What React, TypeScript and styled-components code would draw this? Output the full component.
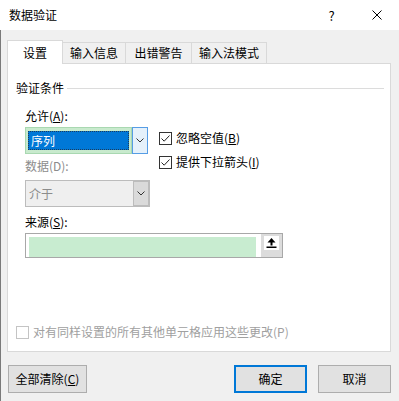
import React from "react";
import styled, { createGlobalStyle } from "styled-components";

const GlobalStyle = createGlobalStyle`
  html, body {
    margin: 0;
    padding: 0;
    background: #f0f0f0;
  }
  body {
    font-family: "Noto Sans CJK SC", "Noto Sans", sans-serif;
    font-size: 12px;
    color: #000;
  }
  * {
    box-sizing: border-box;
  }
`;

const Window = styled.div`
  width: 399px;
  height: 401px;
  display: flex;
  flex-direction: column;
  overflow: hidden;
`;

const TitleBar = styled.div`
  height: 30px;
  background: #fff;
  display: flex;
  align-items: center;
  padding-left: 9px;
`;

const Title = styled.span`
  flex: 1;
  font-size: 12px;
  line-height: 16px;
`;

const CaptionButton = styled.div`
  width: 45px;
  height: 30px;
  display: flex;
  align-items: center;
  justify-content: center;
  font-size: 13px;
  color: #000;
`;

const Body = styled.div`
  flex: 1;
  display: flex;
  flex-direction: column;
  background: #f0f0f0;
  border-left: 1px solid #7a7a7a;
  padding: 10px 8px 0 6px;
`;

const TabRow = styled.div`
  display: flex;
  align-items: flex-end;
  height: 24px;
  margin-bottom: -1px;
  position: relative;
  z-index: 1;
`;

const Tab = styled.div<{ $w: number; $active?: boolean }>`
  width: ${(p) => p.$w}px;
  height: ${(p) => (p.$active ? 24 : 21)}px;
  margin-bottom: ${(p) => (p.$active ? 0 : 1)}px;
  background: ${(p) => (p.$active ? "#fff" : "#f0f0f0")};
  border: 1px solid #d9d9d9;
  border-bottom: none;
  margin-left: ${(p) => (p.$active ? 0 : -1)}px;
  display: flex;
  align-items: center;
  justify-content: center;
  line-height: 16px;
  padding-top: ${(p) => (p.$active ? 1 : 0)}px;
`;

const Panel = styled.div`
  height: 289px;
  background: #fff;
  border: 1px solid #d9d9d9;
  display: flex;
  flex-direction: column;
  padding: 0 6px 11px 8px;
`;

const GroupHeader = styled.div`
  margin-top: 16px;
  display: flex;
  align-items: center;
  gap: 3px;
  line-height: 16px;
`;

const GroupLine = styled.div`
  flex: 1;
  height: 1px;
  background: #dcdcdc;
`;

const Form = styled.div`
  padding-left: 9px;
  display: flex;
  flex-direction: column;
`;

const Label = styled.div<{ $mt: number; $disabled?: boolean }>`
  margin-top: ${(p) => p.$mt}px;
  line-height: 16px;
  color: ${(p) => (p.$disabled ? "#8c8c8c" : "#000")};

  u {
    text-underline-offset: 1px;
  }
`;

const Row = styled.div`
  display: flex;
  margin-top: 3px;
`;

const LeftColumn = styled.div`
  width: 125px;
  display: flex;
  flex-direction: column;
`;

const RightColumn = styled.div`
  margin-left: 9px;
  padding-top: 3px;
  display: flex;
  flex-direction: column;
  gap: 8px;
`;

const CheckRow = styled.label<{ $disabled?: boolean }>`
  display: flex;
  align-items: center;
  gap: 4px;
  height: 16px;
  line-height: 16px;
  color: ${(p) => (p.$disabled ? "#a0a0a0" : "#000")};

  u {
    text-underline-offset: 1px;
  }
`;

const Box = styled.span<{ $disabled?: boolean }>`
  width: 13px;
  height: 13px;
  border: 1px solid ${(p) => (p.$disabled ? "#c4c4c4" : "#333")};
  background: #fff;
  display: flex;
  align-items: center;
  justify-content: center;
`;

const ComboActive = styled.div`
  width: 123px;
  height: 27px;
  display: flex;
`;

const ComboField = styled.div`
  flex: 1;
  background: #c8eacd;
  border: 1px solid #a9d8b1;
  padding: 3px 2px;
  display: flex;
`;

const ComboValue = styled.div`
  flex: 1;
  background: #0078d7;
  color: #fff;
  border: 1px dotted #1c3d5c;
  padding-left: 2px;
  line-height: 16px;
  display: flex;
  align-items: center;
`;

const DropButton = styled.div<{ $disabled?: boolean }>`
  width: 16px;
  display: flex;
  align-items: center;
  justify-content: center;
  background: ${(p) => (p.$disabled ? "#dadada" : "#e5f1fb")};
  border: 1px solid ${(p) => (p.$disabled ? "#bcbcbc" : "#569de5")};
  border-left-width: ${(p) => (p.$disabled ? 1 : 1)}px;
`;

const ComboDisabled = styled.div`
  width: 125px;
  height: 27px;
  margin-top: 6px;
  display: flex;
  background: #efefef;
  border: 1px solid #bcbcbc;
`;

const DisabledValue = styled.div`
  flex: 1;
  color: #8c8c8c;
  padding-left: 3px;
  display: flex;
  align-items: center;
  line-height: 16px;
`;

const SourceInput = styled.div`
  width: 258px;
  height: 25px;
  margin-top: 3px;
  display: flex;
  border: 1px solid #a8a8a8;
  background: #fff;
`;

const SourceFill = styled.div`
  flex: 1;
  margin: 3px 5px 0 3px;
  background: #c8ecd0;
`;

const RefButton = styled.div`
  width: 21px;
  background: #dcdcdc;
  display: flex;
  align-items: flex-start;
  justify-content: center;
  padding-top: 2px;
`;

const RefIcon = styled.div`
  width: 15px;
  height: 14px;
  background: #fff;
  display: flex;
  align-items: center;
  justify-content: center;
`;

const BottomCheck = styled.div`
  margin-top: auto;
`;

const Footer = styled.div`
  display: flex;
  padding: 13px 0 0 1px;
`;

const Button = styled.div<{ $w: number; $primary?: boolean }>`
  width: ${(p) => p.$w}px;
  height: 28px;
  background: #e1e1e1;
  border: ${(p) => (p.$primary ? "2px solid #0078d7" : "1px solid #adadad")};
  display: flex;
  align-items: center;
  justify-content: center;
  line-height: 16px;

  & + & {
    margin-left: 11px;
  }

  u {
    text-underline-offset: 1px;
  }
`;

const Spacer = styled.div`
  flex: 1;
`;

const Chevron = () => (
  <svg width="8" height="5" viewBox="0 0 8 5">
    <path d="M0.5 0.5 L4 4 L7.5 0.5" fill="none" stroke="#333" strokeWidth="1" />
  </svg>
);

const Check = () => (
  <svg width="11" height="11" viewBox="0 0 11 11">
    <path d="M1.5 5.5 L4.2 8.2 L9.5 2.5" fill="none" stroke="#222" strokeWidth="1" />
  </svg>
);

const Checkbox: React.FC<{ checked?: boolean; disabled?: boolean; children: React.ReactNode }> = ({
  checked,
  disabled,
  children,
}) => (
  <CheckRow $disabled={disabled}>
    <Box $disabled={disabled}>{checked && <Check />}</Box>
    <span>{children}</span>
  </CheckRow>
);

export default function App() {
  return (
    <Window>
      <GlobalStyle />
      <TitleBar>
        <Title>数据验证</Title>
        <CaptionButton>?</CaptionButton>
        <CaptionButton>
          <svg width="10" height="10" viewBox="0 0 10 10">
            <path d="M0.5 0.5 L9.5 9.5 M9.5 0.5 L0.5 9.5" stroke="#000" strokeWidth="1" />
          </svg>
        </CaptionButton>
      </TitleBar>
      <Body>
        <TabRow>
          <Tab $w={56} $active>
            设置
          </Tab>
          <Tab $w={64}>输入信息</Tab>
          <Tab $w={67}>出错警告</Tab>
          <Tab $w={76}>输入法模式</Tab>
        </TabRow>
        <Panel>
          <GroupHeader>
            <span>验证条件</span>
            <GroupLine />
          </GroupHeader>
          <Form>
            <Label $mt={12}>
              允许(<u>A</u>):
            </Label>
            <Row>
              <LeftColumn>
                <ComboActive>
                  <ComboField>
                    <ComboValue>序列</ComboValue>
                  </ComboField>
                  <DropButton>
                    <Chevron />
                  </DropButton>
                </ComboActive>
                <Label $mt={4} $disabled>
                  数据(D):
                </Label>
                <ComboDisabled>
                  <DisabledValue>介于</DisabledValue>
                  <DropButton $disabled>
                    <Chevron />
                  </DropButton>
                </ComboDisabled>
              </LeftColumn>
              <RightColumn>
                <Checkbox checked>
                  忽略空值(<u>B</u>)
                </Checkbox>
                <Checkbox checked>
                  提供下拉箭头(<u>I</u>)
                </Checkbox>
              </RightColumn>
            </Row>
            <Label $mt={7}>
              来源(<u>S</u>):
            </Label>
            <SourceInput>
              <SourceFill />
              <RefButton>
                <RefIcon>
                  <svg width="13" height="12" viewBox="0 0 13 12">
                    <path d="M6.5 1 L2.5 5.5 L10.5 5.5 Z" fill="#000" />
                    <rect x="5.5" y="5" width="2" height="3.5" fill="#000" />
                    <rect x="1.5" y="9.5" width="10" height="1.5" fill="#000" />
                  </svg>
                </RefIcon>
              </RefButton>
            </SourceInput>
          </Form>
          <BottomCheck>
            <Checkbox disabled>对有同样设置的所有其他单元格应用这些更改(P)</Checkbox>
          </BottomCheck>
        </Panel>
        <Footer>
          <Button $w={79}>
            全部清除(<u>C</u>)
          </Button>
          <Spacer />
          <Button $w={73} $primary>
            确定
          </Button>
          <Button $w={73}>取消</Button>
        </Footer>
      </Body>
    </Window>
  );
}
